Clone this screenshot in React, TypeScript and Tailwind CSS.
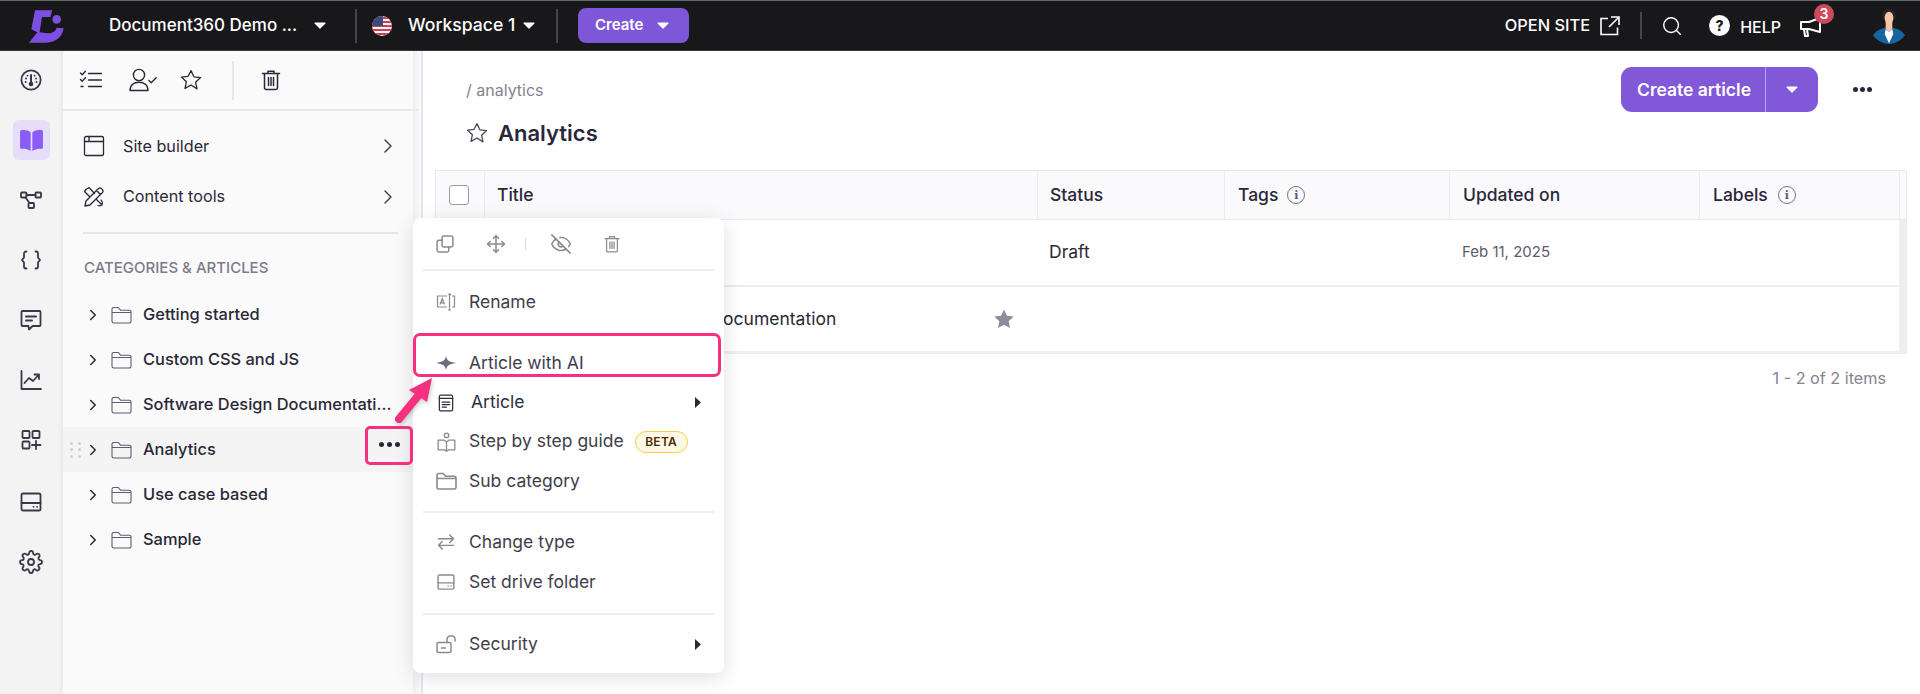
import React from 'react'
import { ChevronRight, Search, Move, EyeOff } from 'lucide-react'

type IconProps = { className?: string }

const Svg = ({ size = 24, className, children, sw = 1.5 }: { size?: number; className?: string; children: React.ReactNode; sw?: number }) => (
  <svg width={size} height={size} viewBox="0 0 24 24" fill="none" stroke="currentColor" strokeWidth={sw} strokeLinecap="round" strokeLinejoin="round" className={className}>
    {children}
  </svg>
)

const Caret = ({ className }: IconProps) => (
  <svg width="12" height="7" viewBox="0 0 12 7" className={className}>
    <path d="M1 .6h10a.6.6 0 0 1 .45 1L6.4 6.5a.6.6 0 0 1-.85 0L.55 1.6A.6.6 0 0 1 1 .6z" fill="currentColor" />
  </svg>
)

const Logo = () => (
  <svg width="60" height="50" viewBox="0 0 180 150">
    <path d="M45 28h52l-6 20H66l-7 46 24 3c14 0 24-6 27-17l21 2c-4 26-24 43-52 43H27l25-31-18-9z" fill="#7c4fe0" />
    <circle cx="110" cy="55" r="13" fill="#7c4fe0" />
  </svg>
)

const Flag = () => (
  <svg width="20" height="20" viewBox="0 0 20 20">
    <defs>
      <clipPath id="flagclip"><circle cx="10" cy="10" r="10" /></clipPath>
    </defs>
    <g clipPath="url(#flagclip)">
      <rect width="20" height="20" fill="#f4f4f4" />
      <rect y="1" width="20" height="2" fill="#c9424f" />
      <rect y="5" width="20" height="2" fill="#c9424f" />
      <rect y="9" width="20" height="2" fill="#c9424f" />
      <rect y="13" width="20" height="2" fill="#c9424f" />
      <rect y="17" width="20" height="2" fill="#c9424f" />
      <rect width="11" height="10" fill="#3c4a7a" />
    </g>
  </svg>
)

const Avatar = () => (
  <svg width="32" height="36" viewBox="0 0 96 108">
    <circle cx="48" cy="22" r="21" fill="#242424" />
    <path d="M0 82c12-16 26-22 48-24 22 2 36 8 48 24-12 16-28 26-48 26S12 98 0 82z" fill="#17659e" />
    <path d="M38 40h20v22l-10 10-10-10z" fill="#f5c4a6" />
    <ellipse cx="48" cy="30" rx="13" ry="19" fill="#f7c7aa" />
    <path d="M38 64l10 8 10-8 3 14-13 28-13-28z" fill="#fff" />
  </svg>
)

const Star = ({ size = 24, className }: { size?: number; className?: string }) => (
  <Svg size={size} className={className} sw={1.3}>
    <path d="M12 2.6l2.9 6.2 6.7.8-5 4.6 1.4 6.7L12 17l-6 3.4 1.4-6.7-5-4.6 6.7-.8z" />
  </Svg>
)

const Trash = ({ size = 24, className }: { size?: number; className?: string }) => (
  <Svg size={size} className={className} sw={1.5}>
    <path d="M3.5 5.5h17M9 5.5V3.2h6v2.3M5.5 5.5v14.3a1.7 1.7 0 0 0 1.7 1.7h9.6a1.7 1.7 0 0 0 1.7-1.7V5.5M9.5 9.5v8M12 9.5v8M14.5 9.5v8" />
  </Svg>
)

const FolderIcon = ({ className, sw = 1.1 }: { className?: string; sw?: number }) => (
  <svg width="21" height="18" viewBox="0 0 21 18" fill="none" stroke="currentColor" strokeWidth={sw} className={className}>
    <path d="M1 3.2A1.7 1.7 0 0 1 2.7 1.5h4.6l2.2 2.7h8.8A1.7 1.7 0 0 1 20 5.9v9.4a1.7 1.7 0 0 1-1.7 1.7H2.7A1.7 1.7 0 0 1 1 15.3zM1 6.500h19" />
  </svg>
)

const InfoDot = () => (
  <span className="w-[18px] h-[18px] rounded-full border-[1.5px] border-[#77758a] text-[#5b5970] flex items-center justify-center text-[11px] font-bold leading-none [font-family:'DejaVu_Serif',serif]">i</span>
)

const GaugeIcon = () => (
  <Svg size={24} sw={1.8}>
    <circle cx="12" cy="12" r="9.6" />
    <path d="M12 7v8" strokeWidth="2" />
    <circle cx="12" cy="16" r="1.4" fill="currentColor" />
    <path d="M7 10.5h.1M8.5 7.6h.1M15.5 7.6h.1M17 10.5h.1M6.6 14h.1M17.4 14h.1" strokeWidth="1.8" />
  </Svg>
)
const BookIcon = () => (
  <svg width="25" height="23" viewBox="0 0 24 22" fill="#8b5cf6">
    <path d="M1 2.6C1 1.6 1.8 1 2.8 1c3.6 0 6.8.6 8.4 2.2V21c-2-1.4-5-2-8.6-2C1.7 19 1 18.4 1 17.5zM23 2.6C23 1.6 22.2 1 21.2 1c-3.6 0-6.8.6-8.4 2.2V21c2-1.4 5-2 8.6-2 .9 0 1.6-.6 1.6-1.5z" />
  </svg>
)
const NodesIcon = () => (
  <Svg size={24} sw={1.8}>
    <rect x="2" y="4.5" width="5.5" height="5" rx=".8" />
    <rect x="16.5" y="4.5" width="5.5" height="5" rx=".8" />
    <rect x="9.5" y="15" width="5.5" height="5" rx=".8" />
    <path d="M7.5 7h9M6.5 9.5l4 5.5" />
  </Svg>
)
const BracesIcon = () => (
  <Svg size={24} sw={1.8}>
    <path d="M7.5 3.5H7A2 2 0 0 0 5 5.5v4L3 12l2 2.5v4a2 2 0 0 0 2 2h.5M16.5 3.5h.5a2 2 0 0 1 2 2v4l2 2.5-2 2.5v4a2 2 0 0 1-2 2h-.5" />
  </Svg>
)
const ChatIcon = () => (
  <Svg size={24} sw={1.8}>
    <path d="M3.5 3h17a1 1 0 0 1 1 1v13a1 1 0 0 1-1 1h-6.8L10 21.5 9.4 18H3.5a1 1 0 0 1-1-1V4a1 1 0 0 1 1-1z" />
    <path d="M7 8.5h10M7 12.5h6" strokeWidth="2" />
  </Svg>
)
const ChartIcon = () => (
  <Svg size={24} sw={1.8}>
    <path d="M2.5 3v18h19.5" />
    <path d="M5.5 15l4.5-5 4 3 5.5-6M15.5 6.5h4.5V11" />
  </Svg>
)
const AppsIcon = () => (
  <Svg size={24} sw={1.8}>
    <rect x="3.5" y="3" width="7" height="7" rx="1" />
    <rect x="13.5" y="3" width="7" height="7" rx="1" />
    <rect x="3.5" y="13.5" width="7" height="7" rx="1" />
    <path d="M17 13v8M13 17h8.5" />
  </Svg>
)
const DriveIcon = ({ size = 24, sw = 1.8 }: { size?: number; sw?: number }) => (
  <Svg size={size} sw={sw}>
    <rect x="2.5" y="3.5" width="19" height="17" rx="1.6" />
    <path d="M2.5 13h19M14.5 16.8h.1M18 16.8h.1" />
  </Svg>
)
const GearIcon = () => (
  <Svg size={24} sw={1.8}>
    <circle cx="12" cy="12" r="3" />
    <path d="M19.4 15a1.7 1.7 0 0 0 .3 1.8l.1.1a2 2 0 1 1-2.9 2.9l-.1-.1a1.7 1.7 0 0 0-2.8 1.2v.1a2 2 0 1 1-4 0V21a1.7 1.7 0 0 0-2.9-1.2l-.1.1a2 2 0 1 1-2.9-2.9l.1-.1a1.7 1.7 0 0 0-1.2-2.8H3a2 2 0 1 1 0-4h.1a1.7 1.7 0 0 0 1.2-2.9l-.1-.1a2 2 0 1 1 2.9-2.9l.1.1a1.7 1.7 0 0 0 1.8.3h.1a1.7 1.7 0 0 0 1-1.5V3a2 2 0 1 1 4 0v.1a1.7 1.7 0 0 0 2.9 1.2l.1-.1a2 2 0 1 1 2.9 2.9l-.1.1a1.7 1.7 0 0 0-.3 1.8v.1a1.7 1.7 0 0 0 1.5 1H21a2 2 0 1 1 0 4h-.1a1.7 1.7 0 0 0-1.5 1z" />
  </Svg>
)

const railIcons = [
  { key: 'gauge', icon: <GaugeIcon /> },
  { key: 'book', icon: <BookIcon />, active: true },
  { key: 'nodes', icon: <NodesIcon /> },
  { key: 'braces', icon: <BracesIcon /> },
  { key: 'chat', icon: <ChatIcon /> },
  { key: 'chart', icon: <ChartIcon /> },
  { key: 'apps', icon: <AppsIcon /> },
  { key: 'drive', icon: <DriveIcon />, extra: 'mt-[2px]' },
  { key: 'gear', icon: <GearIcon /> },
]

const treeItems = ['Getting started', 'Custom CSS and JS', 'Software Design Documentati...', 'Analytics', 'Use case based', 'Sample']

const Rail = () => (
  <div className="w-[63px] shrink-0 bg-[#f3f3f3] shadow-[inset_-4px_0_4px_-2px_rgba(0,0,0,0.05)] flex flex-col items-center pt-[9px] pr-[1px] gap-[20px] text-[#3a3848]">
    {railIcons.map((item) => (
      <div key={item.key} className={`h-[40px] w-[37px] flex items-center justify-center rounded-[6px] ${item.active ? 'bg-[#e6def9]' : ''} ${item.extra ?? ''}`}>
        {item.icon}
      </div>
    ))}
  </div>
)

const Sidebar = () => (
  <div className="w-[360px] shrink-0 flex bg-[#fafafa] border-r-2 border-[#e3e5f5] text-[#2a2838]">
    <div className="w-[350px] shrink-0">
      <div className="relative z-[1] w-[355px] h-[60px] border-b-2 border-[#e9e9e9] flex items-center pl-[16px]">
        <Svg size={24} sw={1.4}>
          <path d="M9.5 5.5h13M9.5 12h13M9.5 18.5h13M1.5 5l1.7 1.7L6.4 3.3M1.5 11.5l1.7 1.7 3.2-3.4M2 18.5h2" />
        </Svg>
        <div className="ml-[26px]">
          <svg width="28" height="26" viewBox="0 0 28 26" fill="none" stroke="currentColor" strokeWidth="1.4" strokeLinecap="round" strokeLinejoin="round">
            <circle cx="10" cy="8" r="5.6" />
            <path d="M1 23.5c0-5.5 4-8.3 9-8.3s9 2.8 9 8.3zM20 13.5l2.2 2.2 5-5" />
          </svg>
        </div>
        <Star size={24} className="ml-[22px]" />
        <div className="w-[2px] h-[39px] bg-[#e6e6e6] ml-[29px]" />
        <Trash size={24} className="ml-[25px]" />
      </div>
      <div className="mt-[10px]">
        <div className="h-[50px] flex items-center pl-[19px] text-[16.2px]">
          <Svg size={24} sw={1.3}>
            <rect x="2.5" y="2.5" width="19" height="19" rx="1.6" />
            <path d="M2.5 7.5h19M7 2.5v5" />
          </Svg>
          <span className="ml-[17px]">Site builder</span>
          <ChevronRight size={24} strokeWidth={1.4} className="ml-auto mr-[13px] text-[#3a3848]" />
        </div>
        <div className="h-[51px] flex items-center pl-[19px] text-[16.2px]">
          <Svg size={24} sw={1.3}>
            <path d="M3 21l1-5L16.5 3.5a2 2 0 0 1 2.8 0l1.2 1.2a2 2 0 0 1 0 2.8L8 20zM14.5 5.5l4 4M4 4.5L7 2.5l5.5 6M20 20l-6-6M16 20.5c2 1 4.500-.5 4.500-3l-1.500-2.500M4 4.500l-1.500 2 5 5" />
          </Svg>
          <span className="ml-[17px]">Content tools</span>
          <ChevronRight size={24} strokeWidth={1.4} className="ml-auto mr-[13px] text-[#3a3848]" />
        </div>
      </div>
      <div className="mx-[20px] mt-[10px] border-t-2 border-[#e6e6e6] w-[315px]" />
      <div className="mt-[24px] h-[20px] pl-[21px] text-[15px] leading-[20px] text-[#7d7b89] font-medium whitespace-nowrap">CATEGORIES &amp; ARTICLES</div>
      <div className="mt-[14px]">
        {treeItems.map((name) => {
          const active = name === 'Analytics'
          return (
            <div key={name} className={`h-[45px] flex items-center text-[16.4px] font-medium ${active ? 'bg-[#f4f4f4]' : ''}`}>
              <div className="w-[17px] ml-[4px] flex justify-center">
                {active && (
                  <div className="grid grid-cols-2 gap-x-[5px] gap-y-[3.5px]">
                    {[0, 1, 2, 3, 4, 5].map((d) => (
                      <span key={d} className="w-[3px] h-[3px] rounded-full bg-[#cfcfcf]" />
                    ))}
                  </div>
                )}
              </div>
              <ChevronRight size={18} strokeWidth={2} className="text-[#2a2838]" />
              <FolderIcon className="ml-[9px] text-[#5f5d70]" />
              <span className="ml-[11px] whitespace-nowrap">{name}</span>
            </div>
          )
        })}
      </div>
    </div>
    <div className="w-[8px] bg-gradient-to-r from-[#efefef] to-[#fbfbfb]" />
  </div>
)

const columns = 'grid grid-cols-[49px_553px_187px_225px_250px_200px_8px]'

const Main = () => (
  <div className="flex-1 bg-white text-[#2a2838]">
    <div className="h-[119px] flex justify-between">
      <div className="pl-[43px] pt-[28px]">
        <div className="text-[16px] leading-[22px] text-[#85838f]">/ analytics</div>
        <div className="mt-[17px] flex items-center">
          <Star size={24} className="text-[#4a4858] -ml-[1px]" />
          <span className="ml-[9px] text-[22px] leading-[30px] font-semibold">Analytics</span>
        </div>
      </div>
      <div className="flex items-start pt-[16px] pr-[48px]">
        <div className="w-[197px] h-[45px] rounded-[11px] bg-[#8058d8] text-white flex items-center translate-x-[1px]">
          <span className="w-[145px] pl-[16px] pt-[1px] text-[17.5px] font-semibold h-full flex items-center border-r border-[#b7a3e8] whitespace-nowrap">Create article</span>
          <Caret className="ml-[20px]" />
        </div>
        <div className="ml-[36px] mt-[20px] flex gap-[2px]">
          {[0, 1, 2].map((d) => (
            <span key={d} className="w-[5px] h-[5px] rounded-full bg-[#2a2838]" />
          ))}
        </div>
      </div>
    </div>
    <div className="ml-[12px] w-[1472px]">
      <div className={`${columns} h-[50px] bg-[#fafafc] border border-[#e9e9ee] text-[17.5px] font-medium`}>
        <div className="flex items-center pl-[13px] border-r border-[#ececf0]">
          <span className="w-[20px] h-[20px] rounded-[3px] border border-[#9c9aa6] bg-white" />
        </div>
        <div className="flex items-center pl-[12px] border-r border-[#ececf0]">Title</div>
        <div className="flex items-center pl-[12px] border-r border-[#ececf0]">Status</div>
        <div className="flex items-center gap-[9px] pl-[13px] border-r border-[#ececf0]">Tags <InfoDot /></div>
        <div className="flex items-center pl-[13px] border-r border-[#ececf0]">Updated on</div>
        <div className="flex items-center gap-[10px] pl-[13px] border-r border-[#ececf0]">Labels <InfoDot /></div>
        <div />
      </div>
      <div className={`${columns} h-[67px] border-b-2 border-[#eeeeee] text-[17.5px]`}>
        <div />
        <div />
        <div className="flex items-center pl-[12px]">Draft</div>
        <div />
        <div className="flex items-center pl-[13px] text-[15px] text-[#5d5b6a]">Feb 11, 2025</div>
        <div />
        <div className="bg-[#eeeeee]" />
      </div>
      <div className={`${columns} h-[67px] border-b-[3px] border-[#eeeeee] text-[17.5px]`}>
        <div />
        <div className="flex items-center justify-between pl-[85px] pr-[22px]">
          <span className="whitespace-nowrap">Software Design Documentation</span>
          <svg width="22" height="22" viewBox="0 0 24 24" fill="#8f8d9a" className="-mt-[1px]">
            <path d="M12 1.6l3.2 6.9 7.4.9-5.500 5.100 1.500 7.400L12 18.200l-6.600 3.700 1.500-7.400-5.500-5.100 7.400-.9z" />
          </svg>
        </div>
        <div />
        <div />
        <div />
        <div />
        <div className="bg-[#eeeeee]" />
      </div>
      <div className="mt-[13px] pr-[21px] text-right text-[16.2px] leading-[22px] text-[#85838f]">1 - 2 of 2 items</div>
    </div>
  </div>
)

const MenuRow = ({ icon, label, h = 'h-[40px]', dark, caret, badge, extra }: { icon: React.ReactNode; label: string; h?: string; dark?: boolean; caret?: boolean; badge?: boolean; extra?: string }) => (
  <div className={`${h} ${extra ?? ''} flex items-center pl-[22px] pr-[23px] text-[17.5px] ${dark ? 'text-[#2f2d3d]' : 'text-[#3f3d4d]'}`}>
    <span className={`w-[22px] flex justify-center ${dark ? 'text-[#2f2d3d]' : 'text-[#8a8893]'}`}>{icon}</span>
    <span className={`whitespace-nowrap ${dark ? 'ml-[14px]' : 'ml-[12px]'}`}>{label}</span>
    {badge && (
      <span className="ml-[11px] w-[53px] h-[22px] rounded-full bg-[#fff8e4] border border-[#f9cf4a] flex items-center justify-center text-[12px] font-semibold tracking-[0.3px] text-[#4a2a08]">BETA</span>
    )}
    {caret && (
      <svg width="6" height="11" viewBox="0 0 6 11" className="ml-auto text-[#2a2838]">
        <path d="M0 0l6 5.500L0 11z" fill="currentColor" />
      </svg>
    )}
  </div>
)

const ContextMenu = () => (
  <div className="absolute left-[413px] top-[218px] w-[311px] bg-white rounded-[7px] shadow-[0_4px_20px_rgba(0,0,0,0.13)] z-10">
    <div className="mx-[10px] h-[53px] border-b-2 border-[#eeeeee] flex items-center pl-[12px] text-[#8a8893]">
      <Svg size={20} sw={1.8}>
        <rect x="8.500" y="2.500" width="13" height="13" rx="2" />
        <path d="M8.500 7.500h-4a2 2 0 0 0-2 2v10a2 2 0 0 0 2 2h10a2 2 0 0 0 2-2v-4" />
      </Svg>
      <Move size={20} strokeWidth={1.8} className="ml-[31px]" />
      <span className="w-[1px] h-[12px] bg-[#d9d9d9] ml-[19px]" />
      <EyeOff size={22} strokeWidth={1.7} className="ml-[24px]" />
      <Trash size={20} className="ml-[30px]" />
    </div>
    <div className="pt-[11px] pb-[9px]">
      <MenuRow
        label="Rename"
        icon={
          <svg width="20" height="18" viewBox="0 0 20 18" fill="none" stroke="currentColor" strokeWidth="1.2">
            <path d="M11 3H1.500v11H11M16 3h2.500v11H16M12 1h2a1 1 0 0 1 .5.5A1 1 0 0 1 15 1M13.500 1.500v14M12 17h1a1 1 0 0 0 .5-.5 1 1 0 0 0 .5.5h1M4 11.500L6.300 5.500l2.200 6M4.700 9.800h3.200" />
          </svg>
        }
      />
      <MenuRow
        label="Article with AI"
        extra="mt-[21px]"
        icon={
          <svg width="20" height="14" viewBox="0 0 20 14" fill="#6f6d7a">
            <path d="M10 0C10.800 4.500 13 6 20 7 13 8 10.800 9.500 10 14 9.200 9.500 7 8 0 7 7 6 9.200 4.500 10 0z" />
          </svg>
        }
      />
      <MenuRow
        label="Article"
        h="h-[39px]"
        dark
        caret
        icon={
          <Svg size={20} sw={1.5}>
            <rect x="4" y="2.500" width="16" height="19" rx="2" />
            <path d="M4 6.500h16M7.500 11h9M7.500 14h9M7.500 17h5" />
          </Svg>
        }
      />
      <MenuRow
        label="Step by step guide"
        h="h-[39px]"
        badge
        icon={
          <Svg size={21} sw={1.5}>
            <circle cx="12" cy="5" r="2.500" />
            <path d="M2.500 10.500h7l2.500 2 2.500-2h7v11h-7L12 23l-2.500-1.500h-7zM12 12.500V23" />
          </Svg>
        }
      />
      <MenuRow label="Sub category" icon={<FolderIcon sw={1.6} />} />
      <div className="mx-[10px] mt-[10px] border-t-2 border-[#eeeeee]" />
      <MenuRow
        label="Change type"
        extra="mt-[9px]"
        icon={
          <Svg size={20} sw={1.7}>
            <path d="M3 8h18M16.500 3.500 21 8l-4.500 4.500M21 16H3M7.500 11.500 3 16l4.500 4.500" />
          </Svg>
        }
      />
      <MenuRow label="Set drive folder" icon={<DriveIcon size={20} sw={1.7} />} />
      <div className="mx-[10px] mt-[11px] border-t-2 border-[#eeeeee]" />
      <MenuRow
        label="Security"
        caret
        extra="mt-[9px]"
        icon={
          <svg width="21" height="19" viewBox="0 0 21 19" fill="none" stroke="currentColor" strokeWidth="1.5" strokeLinecap="round">
            <rect x="1" y="7.500" width="14" height="10" rx="1.500" />
            <path d="M11 7.500V4a3.500 3.500 0 0 1 3.500-3 3.500 3.500 0 0 1 4.500 3v2M5.500 13h4" />
          </svg>
        }
      />
    </div>
  </div>
)

const Annotations = () => (
  <>
    <div className="absolute left-[365px] top-[426px] w-[48px] h-[39px] rounded-[5px] border-[3px] border-[#f5317f] flex items-center justify-center gap-[3px] z-20">
      {[0, 1, 2].map((d) => (
        <span key={d} className="w-[5px] h-[5px] rounded-full bg-[#2a2838] -mt-[3px]" />
      ))}
    </div>
    <div className="absolute left-[413px] top-[333px] w-[308px] h-[44px] rounded-[7px] border-[3px] border-[#f5317f] z-20" />
    <svg className="absolute left-[390px] top-[370px] z-20 drop-shadow-[1px_2px_2px_rgba(0,0,0,0.2)]" width="50" height="60" viewBox="0 0 50 60">
      <path d="M9 49L28 26" stroke="#f5317f" strokeWidth="8" strokeLinecap="round" />
      <path d="M42 8L19 20l18 12z" fill="#f5317f" />
    </svg>
  </>
)

const TopBar = () => (
  <div className="h-[51px] shrink-0 bg-[#18181b] border-t border-t-[#5f6a6e] border-b border-b-[#3a3a3e] flex items-center pl-[20px] pr-[15px] text-white">
    <Logo />
    <span className="ml-[29px] text-[17px] font-medium w-[194px] whitespace-nowrap">Document360 Demo ...</span>
    <Caret className="ml-[11px]" />
    <span className="ml-[29px] w-[2px] h-[34px] bg-[#46464a]" />
    <span className="ml-[15px]"><Flag /></span>
    <span className="ml-[16px] text-[17.6px] font-medium w-[105px] whitespace-nowrap">Workspace 1</span>
    <Caret className="ml-[10px]" />
    <span className="ml-[21px] w-[2px] h-[34px] bg-[#46464a]" />
    <div className="ml-[20px] w-[111px] h-[35px] rounded-[8px] bg-[#7e57d8] flex items-center pl-[17px] text-[15px] font-semibold">
      Create
      <Caret className="ml-[14px]" />
    </div>
    <span className="ml-auto text-[16.4px] font-medium whitespace-nowrap">OPEN SITE</span>
    <svg className="ml-[10px]" width="20" height="20" viewBox="0 0 20 20" fill="none" stroke="currentColor" strokeWidth="1.6">
      <path d="M8 2.500H1v16h16.500v-7M11 1h8v8M19 1L9 11" />
    </svg>
    <span className="ml-[20px] w-[2px] h-[27px] bg-[#46464a]" />
    <Search size={22} strokeWidth={1.6} className="ml-[19px]" />
    <span className="ml-[26px] w-[21px] h-[21px] rounded-full bg-white text-[#18181b] flex items-center justify-center text-[14px] font-extrabold">?</span>
    <span className="ml-[10px] text-[16px] font-medium mt-[2px]">HELP</span>
    <div className="relative ml-[19px] w-[22px] h-[20px] mt-[2px]">
      <svg width="22" height="20" viewBox="0 0 22 20" fill="none" stroke="currentColor" strokeWidth="2" strokeLinejoin="round">
        <path d="M1 5h8l11-4v14L9 12H1zM4 12l1 7h3l-1-7" />
      </svg>
      <span className="absolute left-[14px] top-[-13px] w-[20px] h-[20px] rounded-full bg-[#cc4a5a] text-white text-[14px] font-semibold flex items-center justify-center">3</span>
    </div>
    <div className="ml-[51px] mt-[1px]"><Avatar /></div>
  </div>
)

export default function App() {
  return (
    <div className="relative w-[1920px] h-[694px] overflow-hidden flex flex-col bg-white [font-family:Inter,sans-serif]">
      <TopBar />
      <div className="flex-1 flex">
        <Rail />
        <Sidebar />
        <Main />
      </div>
      <ContextMenu />
      <Annotations />
    </div>
  )
}
